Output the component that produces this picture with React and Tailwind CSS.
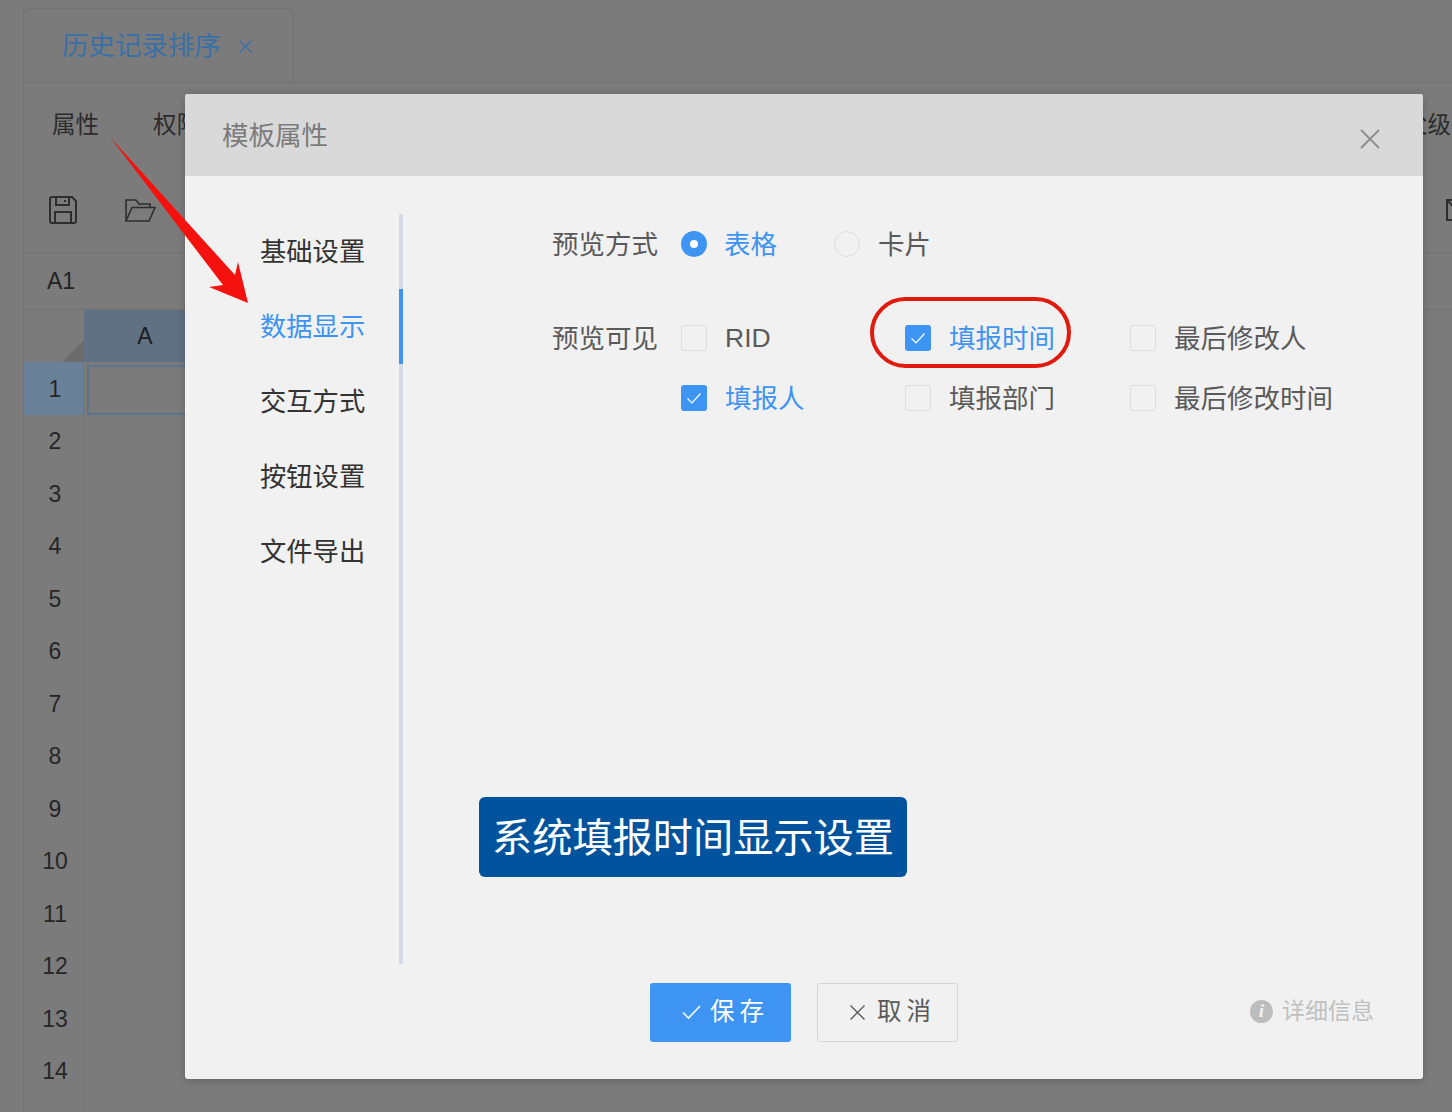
const MENU = ["基础设置", "数据显示", "交互方式", "按钮设置", "文件导出"];

const ROWS = [1, 2, 3, 4, 5, 6, 7, 8, 9, 10, 11, 12, 13, 14];

const VISIBLE = [
  { label: "RID", checked: false },
  { label: "填报时间", checked: true },
  { label: "最后修改人", checked: false },
  { label: "填报人", checked: true },
  { label: "填报部门", checked: false },
  { label: "最后修改时间", checked: false },
];

function CheckBox({ label, checked }) {
  return (
    <div className="flex h-[60px] items-center gap-[18px]">
      {checked ? (
        <span className="flex h-[26px] w-[26px] items-center justify-center rounded-[3px] bg-[#3d94f2]">
          <svg width="18" height="18" viewBox="0 0 18 18" fill="none" stroke="#fff" strokeWidth="1.2">
            <path d="M2.5 9.5 7 14 15.5 4.5" />
          </svg>
        </span>
      ) : (
        <span className="h-[26px] w-[26px] rounded-[3px] border border-[#dcdcdc] bg-[#f1f1f1]" />
      )}
      <span className={(checked ? "text-[#3d94f2] " : "text-[#5a5a5a] ") + (label === "RID" ? "pt-[1px]" : "pt-[3px]")}>
        {label}
      </span>
    </div>
  );
}

function Background() {
  return (
    <div className="h-full w-full bg-[#7b7b7b] pl-[23px] pt-[8px]">
      <div className="h-full border-l border-[#727272]">
        <div className="h-[75px] border-b border-[#717171]">
          <div className="-ml-px flex h-[75px] w-[271px] items-center rounded-t-md border border-b-0 border-[#717171] pl-[38px]">
            <span className="pt-[2px] text-[26.5px] text-[#3a70a8]">历史记录排序</span>
            <svg className="ml-[17px]" width="15" height="15" viewBox="0 0 15 15" stroke="#3a70a8" strokeWidth="1.3">
              <path d="M1.5 1.5 13.5 13.5M13.5 1.5 1.5 13.5" />
            </svg>
          </div>
        </div>
        <div className="flex h-[84px] items-center justify-between pl-[28px] pt-[2px] text-[23.5px] text-[#2c2c2c]">
          <div className="flex gap-[54px]">
            <span>属性</span>
            <span>权限</span>
          </div>
          <span className="pr-px">父级</span>
        </div>
        <div className="flex h-[86px] items-center justify-between border-b border-[#717171] pl-[24px]">
          <div className="flex items-center gap-[47px]">
            <svg width="30" height="30" viewBox="0 0 30 30" fill="none" stroke="#2e2e2e" strokeWidth="2">
              <path d="M4 2h20l4 4v20a2 2 0 0 1-2 2H4a2 2 0 0 1-2-2V4a2 2 0 0 1 2-2Z" />
              <path d="M8 2v8h13V2M17 5v2M7 28V17h16v11" />
            </svg>
            <svg width="31" height="24" viewBox="0 0 31 24" fill="none" stroke="#2e2e2e" strokeWidth="1.6">
              <path d="M1 23V2h10l3 4h11v4" />
              <path d="M1 23 7 9.5h23L24 23Z" />
            </svg>
          </div>
          <svg className="-mr-[8px]" width="14" height="24" viewBox="0 0 14 24" fill="none" stroke="#2e2e2e" strokeWidth="2">
            <rect x="1" y="2" width="20" height="20" />
            <path d="M1 2 14 16" />
          </svg>
        </div>
        <div className="flex h-[57px] items-center border-b border-[#717171] pl-[23px] text-[23px] text-[#222]">
          A1
        </div>
        <div className="flex h-[52px]">
          <div className="flex h-full w-[60px] items-end justify-end">
            <svg width="22" height="22" viewBox="0 0 22 22">
              <path d="M22 0V22H0Z" fill="#6c6c6c" />
            </svg>
          </div>
          <div className="flex h-full w-[122px] items-center justify-center bg-[#5f7183] text-[23px] text-[#1d1d1d]">
            A
          </div>
        </div>
        {ROWS.map((n) => (
          <div key={n} className="flex h-[52.5px]">
            <div
              className={
                "flex h-full w-[60px] items-center justify-center border-r border-[#747474] pl-[3px] pt-[1px] text-[23px] text-[#262626] " +
                (n === 1 ? "bg-[#6a8299]" : "")
              }
            >
              {n}
            </div>
            {n === 1 && <div className="ml-[3px] mt-[3px] h-[50px] w-[110px] border-2 border-[#5a748d] bg-[#7b7b7b]" />}
          </div>
        ))}
        <div className="h-[20px] w-[60px] border-r border-[#747474]" />
      </div>
    </div>
  );
}

export default function App() {
  return (
    <div className="relative h-[1112px] w-[1452px] overflow-hidden font-['Liberation_Sans','Noto_Sans_CJK_SC',sans-serif]">
      <Background />

      <div className="absolute left-[185px] top-[94px] flex h-[985px] w-[1238px] flex-col overflow-hidden rounded-[3px] bg-[#f1f1f1] shadow-[0_2px_8px_rgba(0,0,0,0.2)]">
        <div className="flex h-[82px] shrink-0 items-center justify-between bg-[#d9d9d9] pl-[37px] pr-[42px]">
          <span className="pt-[4px] text-[26.5px] text-[#7b7b7b]">模板属性</span>
          <svg className="mt-[8px]" width="22" height="22" viewBox="0 0 22 22" stroke="#8d8d8d" strokeWidth="1.8">
            <path d="M2 2 20 20M20 2 2 20" />
          </svg>
        </div>

        <div className="flex h-[788px] shrink-0 pt-[38px]">
          <div className="flex w-[218px] shrink-0 flex-col text-[26.3px]">
            {MENU.map((item) => (
              <div
                key={item}
                className={
                  "flex h-[75px] items-center border-r-4 pl-[75px] pt-[2px] " +
                  (item === "数据显示" ? "border-[#3d94f2] text-[#3d94f2]" : "border-[#d6dae2] text-[#333]")
                }
              >
                {item}
              </div>
            ))}
            <div className="flex-1 border-r-4 border-[#d6dae2]" />
          </div>

          <div className="pl-[149px] text-[26.5px] text-[#5a5a5a]">
            <div className="flex h-[60px] items-center">
              <span className="w-[129px] pt-[3px]">预览方式</span>
              <div className="flex w-[153px] items-center gap-[17px]">
                <span className="flex h-[26px] w-[26px] items-center justify-center rounded-full bg-[#3d94f2]">
                  <span className="h-[8px] w-[8px] rounded-full bg-white" />
                </span>
                <span className="pt-[3px] text-[#3d94f2]">表格</span>
              </div>
              <div className="flex items-center gap-[18px]">
                <span className="h-[26px] w-[26px] rounded-full border border-[#dcdcdc]" />
                <span className="pt-[3px]">卡片</span>
              </div>
            </div>
            <div className="mt-[34px] flex">
              <span className="flex h-[60px] w-[129px] items-center pt-[3px]">预览可见</span>
              <div className="grid grid-cols-[224px_225px_auto]">
                {VISIBLE.map((v) => (
                  <CheckBox key={v.label} label={v.label} checked={v.checked} />
                ))}
              </div>
            </div>
          </div>
        </div>

        <div className="flex items-center pl-[465px] pr-[49px] pt-[19px]">
          <button className="flex h-[59px] w-[141px] items-center gap-[9px] rounded-[3px] bg-[#3d94f2] pb-[1px] pl-[32px] text-[24.5px] tracking-[5px] text-white">
            <svg width="19" height="18" viewBox="0 0 19 18" fill="none" stroke="#fff" strokeWidth="1.6">
              <path d="M1 9.5 6.5 15 18 3" />
            </svg>
            保存
          </button>
          <button className="ml-[26px] flex h-[59px] w-[141px] items-center gap-[11px] rounded-[3px] border border-[#d6d6d6] pb-[1px] pl-[31px] text-[24.5px] tracking-[5px] text-[#5a5a5a]">
            <svg width="17" height="17" viewBox="0 0 17 17" stroke="#5a5a5a" strokeWidth="1.4">
              <path d="M1.5 1.5 15.5 15.5M15.5 1.5 1.5 15.5" />
            </svg>
            取消
          </button>
          <div className="ml-auto flex items-center gap-[9px] pb-[2px] text-[23px] text-[#c0c0c0]">
            <span className="flex h-[23px] w-[23px] items-center justify-center rounded-full bg-[#bdbdbd] font-['Liberation_Serif',serif] text-[19px] font-bold italic text-[#f1f1f1]">
              i
            </span>
            详细信息
          </div>
        </div>
      </div>

      {/* annotations drawn over the dialog */}
      <div className="absolute left-[870px] top-[297px] h-[71px] w-[201px] rounded-full border-4 border-[#e01a0f]" />

      <div className="absolute left-[479px] top-[797px] flex h-[80px] w-[428px] items-center justify-center rounded-[6px] bg-[#00539c] pt-[5px] text-[40.2px] text-white">
        系统填报时间显示设置
      </div>

      <svg className="absolute left-0 top-0" width="260" height="320" viewBox="0 0 260 320">
        <path d="M110 137 235 275 238 262 248 303 209 287 223 285Z" fill="#f5110d" />
      </svg>
    </div>
  );
}
